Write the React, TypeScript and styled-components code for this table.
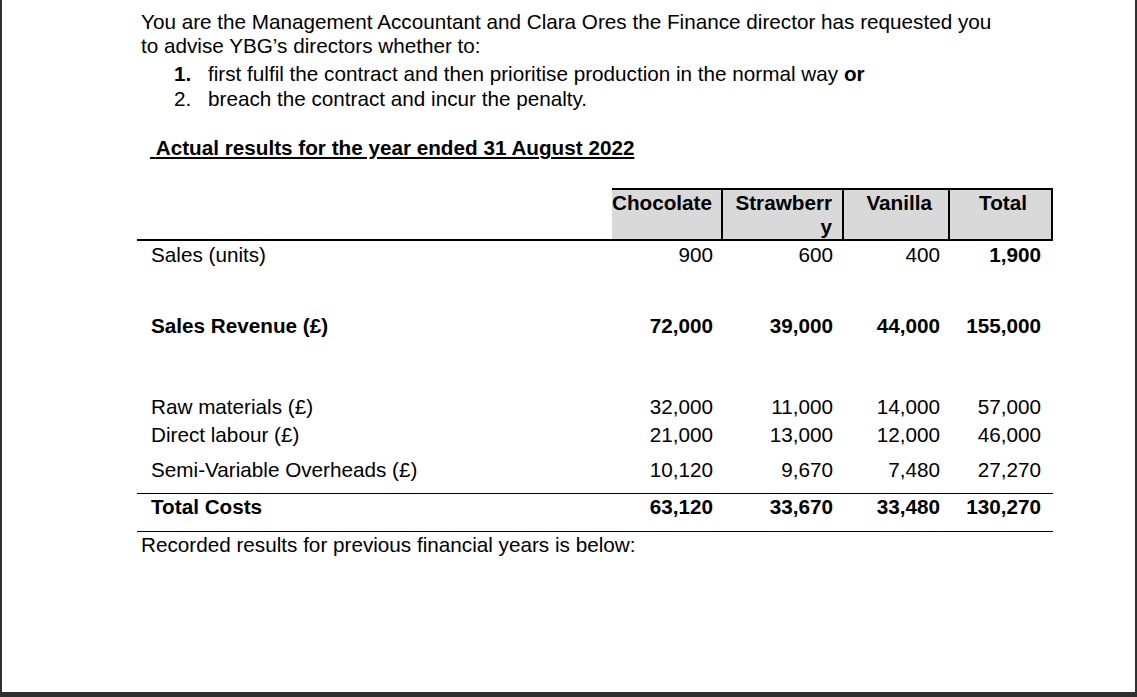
import React from 'react';
import styled, { createGlobalStyle } from 'styled-components';

const GlobalStyle = createGlobalStyle`
  html, body {
    margin: 0;
    padding: 0;
    background: #ffffff;
  }
`;

const Page = styled.div`
  width: 1137px;
  height: 697px;
  box-sizing: border-box;
  border-left: 2px solid #2f2f2f;
  border-right: 2px solid #2f2f2f;
  border-bottom: 5px solid #2f2f2f;
  padding: 10px 0 0 139px;
  font-family: "Liberation Sans", Arial, sans-serif;
  font-size: 20.7px;
  color: #000;
  overflow: hidden;
`;

const Intro = styled.p`
  margin: 0;
  line-height: 24px;
  width: 866px;
`;

const Options = styled.ol`
  list-style: none;
  margin: 3px 0 0 0;
  padding: 0 0 0 33px;
`;

const Option = styled.li`
  display: flex;
  line-height: 25px;
`;

const OptionNum = styled.span<{ $bold?: boolean }>`
  width: 34px;
  font-weight: ${(p) => (p.$bold ? 700 : 400)};
`;

const Heading = styled.h2`
  margin: 25px 0 0 9px;
  font-size: 20.7px;
  line-height: 24px;
  font-weight: 700;
  text-decoration: underline;
  text-decoration-thickness: 2px;
  text-underline-offset: 2px;
`;

const Table = styled.div`
  margin: 28px 0 0 -4px;
  width: 916px;
`;

const Row = styled.div<{ $line?: number }>`
  display: grid;
  grid-template-columns: 475px 111px 121px 106px 103px;
  border-bottom: ${(p) => (p.$line ? `${p.$line}px solid #000` : 'none')};
`;

const HeadCell = styled.div<{ $pr: number }>`
  box-sizing: border-box;
  background: #d9d9d9;
  border-top: 2px solid #000;
  border-right: 2px solid #000;
  padding: 1px ${(p) => p.$pr}px 0 0;
  line-height: 24px;
  height: 51px;
  font-weight: 700;
  text-align: right;
`;

const Cell = styled.div<{ $top: number; $bottom?: number; $bold?: boolean }>`
  padding-top: ${(p) => p.$top}px;
  padding-bottom: ${(p) => p.$bottom ?? 0}px;
  line-height: 24px;
  font-weight: ${(p) => (p.$bold ? 700 : 400)};
`;

const Label = styled(Cell)`
  padding-left: 14px;
`;

const Num = styled(Cell)<{ $pr: number }>`
  text-align: right;
  padding-right: ${(p) => p.$pr}px;
`;

const Footnote = styled.p`
  margin: 1px 0 0 0;
  line-height: 24px;
`;

type Line = {
  label: string;
  values: string[];
  top: number;
  bottom?: number;
  bold?: boolean;
  labelBold?: boolean;
  lastBold?: boolean;
  line?: number;
};

const numPad = [10, 11, 10, 12];

const rows: Line[] = [
  { label: 'Sales (units)', values: ['900', '600', '400', '1,900'], top: 2, lastBold: true },
  { label: 'Sales Revenue (£)', values: ['72,000', '39,000', '44,000', '155,000'], top: 47, bold: true, labelBold: true },
  { label: 'Raw materials (£)', values: ['32,000', '11,000', '14,000', '57,000'], top: 57 },
  { label: 'Direct labour (£)', values: ['21,000', '13,000', '12,000', '46,000'], top: 4 },
  { label: 'Semi-Variable Overheads (£)', values: ['10,120', '9,670', '7,480', '27,270'], top: 11, bottom: 11, line: 1 },
  { label: 'Total Costs', values: ['63,120', '33,670', '33,480', '130,270'], top: 1, bottom: 12, bold: true, labelBold: true, line: 1 },
];

const App = () => {
  return (
    <>
      <GlobalStyle />
      <Page>
        <Intro>
          You are the Management Accountant and Clara Ores the Finance director has requested you
          to advise YBG’s directors whether to:
        </Intro>
        <Options>
          <Option>
            <OptionNum $bold>1.</OptionNum>
            <span>
              first fulfil the contract and then prioritise production in the normal way <b>or</b>
            </span>
          </Option>
          <Option>
            <OptionNum>2.</OptionNum>
            <span>breach the contract and incur the penalty.</span>
          </Option>
        </Options>
        <Heading>{'\u00a0'}Actual results for the year ended 31 August 2022</Heading>

        <Table>
          <Row $line={2}>
            <div />
            <HeadCell $pr={10}>Chocolate</HeadCell>
            <HeadCell $pr={10}>
              Strawberr
              <br />y
            </HeadCell>
            <HeadCell $pr={16}>Vanilla</HeadCell>
            <HeadCell $pr={24}>Total</HeadCell>
          </Row>
          {rows.map((r) => (
            <Row key={r.label} $line={r.line}>
              <Label $top={r.top} $bottom={r.bottom} $bold={r.labelBold}>
                {r.label}
              </Label>
              {r.values.map((v, i) => (
                <Num
                  key={i}
                  $pr={numPad[i]}
                  $top={r.top}
                  $bottom={r.bottom}
                  $bold={r.bold || (r.lastBold && i === 3)}
                >
                  {v}
                </Num>
              ))}
            </Row>
          ))}
        </Table>
        <Footnote>Recorded results for previous financial years is below:</Footnote>
      </Page>
    </>
  );
};

export default App;
